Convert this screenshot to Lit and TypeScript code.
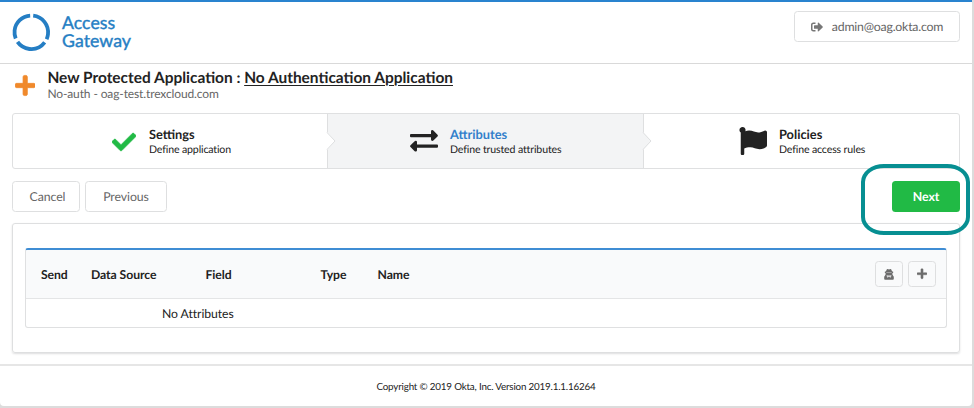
import { LitElement, html, css, svg } from "lit";
import { customElement } from "lit/decorators.js";

const plusPath =
  "M416 208H272V64c0-17.67-14.33-32-32-32h-32c-17.67 0-32 14.33-32 32v144H32c-17.67 0-32 14.33-32 32v32c0 17.67 14.33 32 32 32h144v144c0 17.67 14.33 32 32 32h32c17.67 0 32-14.33 32-32V304h144c17.67 0 32-14.33 32-32v-32c0-17.67-14.33-32-32-32z";
const checkPath =
  "M173.898 439.404l-166.4-166.4c-9.997-9.997-9.997-26.206 0-36.204l36.203-36.204c9.997-9.998 26.207-9.998 36.204 0L192 312.69 432.095 72.596c9.997-9.997 26.207-9.997 36.204 0l36.203 36.204c9.997 9.997 9.997 26.206 0 36.204l-294.4 294.401c-9.998 9.997-26.207 9.997-36.204-.001z";
const flagPath =
  "M349.565 98.783C295.978 98.783 251.721 64 184.348 64c-24.955 0-47.309 4.384-68.045 12.013a55.947 55.947 0 0 0 3.586-23.562C118.117 24.015 94.806 1.206 66.338.048 34.345-1.254 8 24.296 8 56c0 19.026 9.497 35.825 24 45.945V488c0 13.255 10.745 24 24 24h16c13.255 0 24-10.745 24-24v-94.4c28.311-12.064 63.582-22.122 114.435-22.122 53.588 0 97.844 34.783 165.217 34.783 48.169 0 86.667-16.294 122.505-40.858C506.84 359.452 512 349.571 512 339.045v-243.1c0-23.393-24.269-38.87-45.485-29.016-34.338 15.948-76.454 31.854-116.95 31.854z";
const signOutPath =
  "M497 273L329 441c-15 15-41 4.5-41-17v-96H152c-13.3 0-24-10.7-24-24v-96c0-13.3 10.7-24 24-24h136V88c0-21.4 25.9-32 41-17l168 168c9.3 9.4 9.3 24.6 0 34zM192 436v-40c0-6.6-5.4-12-12-12H96c-17.7 0-32-14.3-32-32V160c0-17.7 14.3-32 32-32h84c6.6 0 12-5.4 12-12V76c0-6.6-5.4-12-12-12H96c-53 0-96 43-96 96v192c0 53 43 96 96 96h84c6.6 0 12-5.4 12-12z";

const steps = [
  {
    cls: "settings",
    title: "Settings",
    text: "Define application",
    icon: html`<svg width="24" height="24" viewBox="0 0 512 512">${svg`<path fill="#21ba45" stroke="#21ba45" stroke-width="12" d=${checkPath} />`}</svg>`,
  },
  {
    cls: "attributes",
    title: "Attributes",
    text: "Define trusted attributes",
    icon: html`<svg width="28" height="22" viewBox="0 0 28 22">
      <g fill="#222">
        <path d="M1 4H21V1.4Q21 .1 22.3.1Q23 .1 23.6.7L27.5 4.7Q28.3 5.5 27.5 6.4L23.6 10.3Q23 10.9 22.3 10.9Q21 10.9 21 9.5V7.2H1Q0 7.2 0 6.2V5Q0 4 1 4Z" />
        <path d="M27 14.5H7V12.1Q7 10.8 5.7 10.8Q5 10.8 4.4 11.4L.5 15.3Q-.3 16.1.5 17L4.4 21Q5 21.6 5.7 21.6Q7 21.6 7 20.2V17.7H27Q28 17.7 28 16.7V15.5Q28 14.5 27 14.5Z" />
      </g>
    </svg>`,
  },
  {
    cls: "policies",
    title: "Policies",
    text: "Define access rules",
    icon: html`<svg width="28" height="28" viewBox="0 0 512 512">${svg`<path fill="#222" d=${flagPath} />`}</svg>`,
  },
];

@customElement("app-root")
export class AppRoot extends LitElement {
  static styles = css`
    :host {
      display: block;
      width: 974px;
      height: 408px;
      overflow: hidden;
      background: #dcdcdc;
      font-family: Lato, "Liberation Sans", sans-serif;
      font-size: 12.2px;
      color: #222;
      text-rendering: geometricPrecision;
    }
    * { box-sizing: border-box; }
    svg { display: block; flex: none; }
    .page {
      width: 972px;
      height: 406px;
      background: #fff;
      border-radius: 0 0 4px 4px;
      border-top: 2px solid #2983cf;
      display: flex;
      flex-direction: column;
      position: relative;
    }
    header {
      height: 62px;
      flex: none;
      border-bottom: 1px solid #d9d9d9;
      display: flex;
      justify-content: space-between;
      align-items: flex-start;
      padding: 9px 12px 0;
    }
    .brand { display: flex; gap: 10px; padding-top: 2px; }
    .brand-name {
      font-size: 17.7px;
      line-height: 18px;
      color: #257ec4;
      -webkit-text-stroke: 0.4px #257ec4;
      padding-top: 1px;
      white-space: nowrap;
      letter-spacing: 0.05px;
    }
    .btn {
      border: 1px solid #dedfe0;
      border-radius: 3.5px;
      height: 31px;
      display: flex;
      align-items: center;
      justify-content: center;
      color: #666;
      font-size: 12.3px;
      letter-spacing: -0.08px;
      white-space: nowrap;
    }
    .user { width: 166px; gap: 9px; letter-spacing: -0.21px; }
    .title { display: flex; height: 49px; flex: none; padding-left: 15px; }
    .title svg { margin-top: 10px; }
    .title-text { padding: 5px 0 0 12px; white-space: nowrap; }
    .title-text h1 { margin: 0; font-size: 15.44px; line-height: 18px; font-weight: 700; }
    .title-text h1 span { text-decoration: underline; text-decoration-thickness: 1px; text-underline-offset: 1.5px; }
    .title-text p { margin: 0; font-size: 12px; line-height: 14px; color: #666; letter-spacing: -0.12px; }
    .steps {
      margin: 0 12px;
      height: 56px;
      flex: none;
      border: 1px solid #dfe0e1;
      border-radius: 3px;
      display: grid;
      grid-template-columns: 315px 316px 1fr;
    }
    .step {
      position: relative;
      display: flex;
      align-items: center;
      border-right: 1px solid #dedfe0;
    }
    .step:last-child { border-right: 0; }
    .settings { padding-left: 98.5px; gap: 13.5px; }
    .settings svg { margin-top: 2px; }
    .attributes { padding-left: 82px; gap: 12px; background: #f3f4f5; }
    .policies { padding-left: 95px; gap: 12px; }
    .arrow { position: absolute; right: -9px; top: 18px; z-index: 1; }
    .step svg.arrow { margin: 0; }
    .step-title { font-weight: 700; font-size: 12.8px; line-height: 16px; }
    .attributes .step-title { color: #3280cb; }
    .step-text { font-size: 10.6px; line-height: 14px; white-space: nowrap; letter-spacing: -0.15px; padding-top: 1px; margin-bottom: -1px; }
    .actions { margin: 12px 12px 0; display: flex; gap: 5px; flex: none; }
    .cancel { width: 68px; padding-left: 3px; }
    .previous { width: 82px; }
    .next {
      width: 68px;
      margin-left: auto;
      border: 0;
      background: #21ba45;
      color: #fff;
      font-weight: 700;
    }
    .segment {
      margin: 11px 12px 0;
      height: 130px;
      flex: none;
      border: 1px solid #dedfe0;
      border-radius: 3px;
      box-shadow: 0 1px 2px rgba(34, 36, 38, 0.15);
      padding: 24px 12px 0;
    }
    .table {
      height: 80px;
      border: 1px solid #dfe0e1;
      border-top: 2px solid #3f8dd4;
      border-radius: 3px;
      overflow: hidden;
      font-size: 12.2px;
      letter-spacing: -0.06px;
    }
    .head {
      height: 49px;
      background: #f9fafb;
      border-bottom: 1px solid #e4e5e6;
      display: grid;
      grid-template-columns: 50px 114.5px 115px 57px 1fr auto;
      align-items: center;
      padding: 0 10px 0 15px;
      font-weight: 700;
    }
    .tools { display: flex; gap: 5px; }
    .tools .btn { width: 28px; height: 26px; }
    .empty { height: 29px; line-height: 30px; padding-left: 136px; }
    footer {
      margin-top: 11px;
      border-top: 2px solid #e6e6e6;
      flex: 1;
      text-align: center;
      font-size: 9.8px;
      line-height: 42px;
      letter-spacing: -0.18px;
    }
    .callout {
      position: absolute;
      left: 861px;
      top: 161.5px;
      width: 109px;
      height: 71.5px;
      border: 4px solid #078f92;
      border-radius: 23px / 18px;
    }
  `;

  render() {
    return html`<div class="page">
      <header>
        <div class="brand">
          <svg width="40" height="40" viewBox="0 0 40 40">
            <circle cx="19.3" cy="19.3" r="16.8" fill="none" stroke="#257ec4" stroke-width="3.8"
              stroke-dasharray="31.39 3.8" transform="rotate(-83.5 19.3 19.3)" />
          </svg>
          <div class="brand-name">Access<br />Gateway</div>
        </div>
        <div class="btn user">
          <svg width="12" height="12" viewBox="0 0 512 512">${svg`<path fill="#777" d=${signOutPath} />`}</svg>
          <span>admin@oag.okta.com</span>
        </div>
      </header>
      <div class="title">
        <svg width="20.4" height="23" viewBox="0 0 448 512">${svg`<path fill="#f0892b" stroke="#f0892b" stroke-width="16" d=${plusPath} />`}</svg>
        <div class="title-text">
          <h1>New Protected Application : <span>No Authentication Application</span></h1>
          <p>No-auth - oag-test.trexcloud.com</p>
        </div>
      </div>
      <div class="steps">
        ${steps.map(
          (s, i) => html`<div class="step ${s.cls}">
            ${s.icon}
            <div>
              <div class="step-title">${s.title}</div>
              <div class="step-text">${s.text}</div>
            </div>
            ${i < 2
              ? html`<svg class="arrow" width="10" height="18" viewBox="0 0 10 18">
                  <path d="M0 0H1L9 9L1 18H0Z" fill=${i === 1 ? "#f3f4f5" : "#fff"} />
                  <path d="M1 .5L9 9L1 17.5" fill="none" stroke="#dedfe0" />
                </svg>`
              : null}
          </div>`
        )}
      </div>
      <div class="actions">
        <div class="btn cancel">Cancel</div>
        <div class="btn previous">Previous</div>
        <div class="btn next">Next</div>
      </div>
      <div class="segment">
        <div class="table">
          <div class="head">
            <span>Send</span><span>Data Source</span><span>Field</span><span>Type</span><span>Name</span>
            <div class="tools">
              <div class="btn">
                <svg width="10" height="11" viewBox="0 0 10 11">
                  <path fill="#6d6d6d" d="M2 2.3L2.7.6Q3 0 3.7.1L5 .4L6.3.1Q7 0 7.3.6L8 2.3L9.2 2.8V3.7L8.4 4.3V5.6L9.8 7.8V9.8Q9.8 10.7 9 10.7H1Q.2 10.7.2 9.8V7.8L1.6 5.6V4.3L.8 3.7V2.8Z" />
                  <path fill="#f9fafb" opacity=".75" d="M2.3 3H7.7V3.6H2.3ZM2.6 6L4.2 6.6L5 6.2L5.8 6.6L7.4 6L7 8.4H6.2L5 7.7L3.8 8.4H3Z" />
                </svg>
              </div>
              <div class="btn">
                <svg width="10" height="11.4" viewBox="0 0 448 512">${svg`<path fill="#6d6d6d" stroke="#6d6d6d" stroke-width="20" d=${plusPath} />`}</svg>
              </div>
            </div>
          </div>
          <div class="empty">No Attributes</div>
        </div>
      </div>
      <footer>Copyright © 2019 Okta, Inc. Version 2019.1.1.16264</footer>
      <div class="callout"></div>
    </div>`;
  }
}
